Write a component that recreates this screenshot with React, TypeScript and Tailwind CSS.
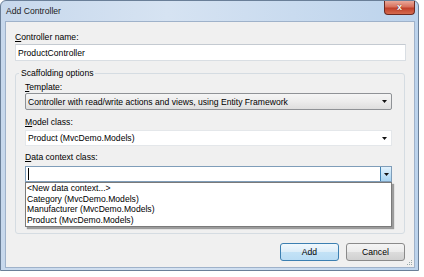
import React from "react";

function Arrow() {
  return (
    <svg width="5" height="3" viewBox="0 0 5 3" className="block">
      <path d="M0 0H5L2.5 3Z" fill="#111" />
    </svg>
  );
}

function U({ children }: { children: React.ReactNode }) {
  return <span className="underline underline-offset-[1px] decoration-[0.8px]">{children}</span>;
}

export default function App() {
  return (
    <div className="w-[424px] h-[277px] bg-white overflow-hidden font-['Liberation_Sans',Arial,sans-serif] text-[8.6px] text-black">
      <div className="w-[419px] h-[271px] flex flex-col rounded-t-[6px] border border-[#6a7f98] bg-[linear-gradient(90deg,#c7d8ec_0%,#d6e3f2_40%,#bcd3ec_100%)]">
        {/* title bar */}
        <div className="h-[20px] flex justify-between shrink-0">
          <div className="pl-[5px] pt-[4px] leading-[12px] text-[8.6px] text-[#1b1b1b]">Add Controller</div>
          <div className="mr-[3px] w-[31px] h-[14px] rounded-b-[4px] border border-[#6b2a22] border-t-0 bg-[linear-gradient(180deg,#e9a99a_0%,#d8705c_45%,#c0402a_55%,#d56b4f_100%)] flex items-center justify-center">
            <span className="text-white font-bold text-[9px] leading-none [text-shadow:0_0_1px_#3a0a00]">x</span>
          </div>
        </div>
        {/* client */}
        <div className="relative ml-[4px] w-[410px] h-[247px] bg-[#f0f0f0] border border-[#9fb2ca] pl-[9px] pr-[8px] pt-[9px]">
          <div className="leading-[12px]"><U>C</U>ontroller name:</div>
          <div className="mt-[1px] h-[17px] bg-white border border-[#d9dee3] border-t-[#c4cad1] flex items-center pl-[2px] leading-[12px]">
            ProductController
          </div>

          <fieldset className="mt-[6px] mr-[1px] p-0 border border-[#d5dce2] rounded-[3px]">
            <legend className="ml-[3px] px-[2px] leading-[12px]">Scaffolding options</legend>
            <div className="pl-[9px] pr-[12px] pt-[2px] pb-[51px]">
              <div className="leading-[12px]"><U>T</U>emplate:</div>
              <div className="h-[17px] rounded-[2px] border border-[#8f9296] bg-[linear-gradient(180deg,#f5f5f5_0%,#ececec_50%,#dedede_100%)] flex items-center justify-between pl-[2px] pr-[4px] leading-[12px]">
                <span>Controller with read/write actions and views, using Entity Framework</span>
                <Arrow />
              </div>

              <div className="mt-[6px] leading-[12px]"><U>M</U>odel class:</div>
              <div className="mt-[2px] h-[16px] bg-white border border-[#e4e7ea] flex items-center justify-between pl-[2px] pr-[4px] leading-[12px]">
                <span>Product (MvcDemo.Models)</span>
                <Arrow />
              </div>

              <div className="mt-[5px] leading-[12px]"><U>D</U>ata context class:</div>
              <div className="relative mt-[3px]">
                <div className="h-[16px] bg-white border border-[#7f9db9] flex items-center pl-[2px]">
                  <div className="w-[1px] h-[12px] bg-black" />
                  <div className="ml-auto h-full w-[11px] border-l border-[#3c7fb1] bg-[linear-gradient(180deg,#e3f2fc_0%,#c4e3f8_50%,#a7d3f1_100%)] flex items-center justify-center">
                    <Arrow />
                  </div>
                </div>
                <div className="absolute left-0 top-full w-full z-10 bg-white border border-[#7a7a7a] shadow-[2px_2px_1px_rgba(0,0,0,0.35)] pl-[1px] leading-[10.7px]">
                  <div>&lt;New data context...&gt;</div>
                  <div>Category (MvcDemo.Models)</div>
                  <div>Manufacturer (MvcDemo.Models)</div>
                  <div>Product (MvcDemo.Models)</div>
                </div>
              </div>
            </div>
          </fieldset>

          <div className="mt-[9px] pr-[1px] flex justify-end gap-[7px]">
            <div className="w-[59px] h-[18px] rounded-[3px] border border-[#3c7fb1] bg-[linear-gradient(180deg,#f1f8fd_0%,#dcedf9_50%,#c3e2f6_51%,#b9dcf4_100%)] flex items-center justify-center leading-[12px]">
              Add
            </div>
            <div className="w-[59px] h-[18px] rounded-[3px] border border-[#8a8a8a] bg-[linear-gradient(180deg,#f4f4f4_0%,#ebebeb_50%,#dcdcdc_51%,#d0d0d0_100%)] flex items-center justify-center leading-[12px]">
              Cancel
            </div>
          </div>

          <div className="absolute right-[2px] bottom-[2px] grid grid-cols-3 gap-[1px]">
            <span />
            <span />
            <span className="w-[1px] h-[1px] bg-[#9aa]" />
            <span />
            <span className="w-[1px] h-[1px] bg-[#9aa]" />
            <span className="w-[1px] h-[1px] bg-[#9aa]" />
            <span className="w-[1px] h-[1px] bg-[#9aa]" />
            <span className="w-[1px] h-[1px] bg-[#9aa]" />
            <span className="w-[1px] h-[1px] bg-[#9aa]" />
          </div>
        </div>
      </div>
    </div>
  );
}
